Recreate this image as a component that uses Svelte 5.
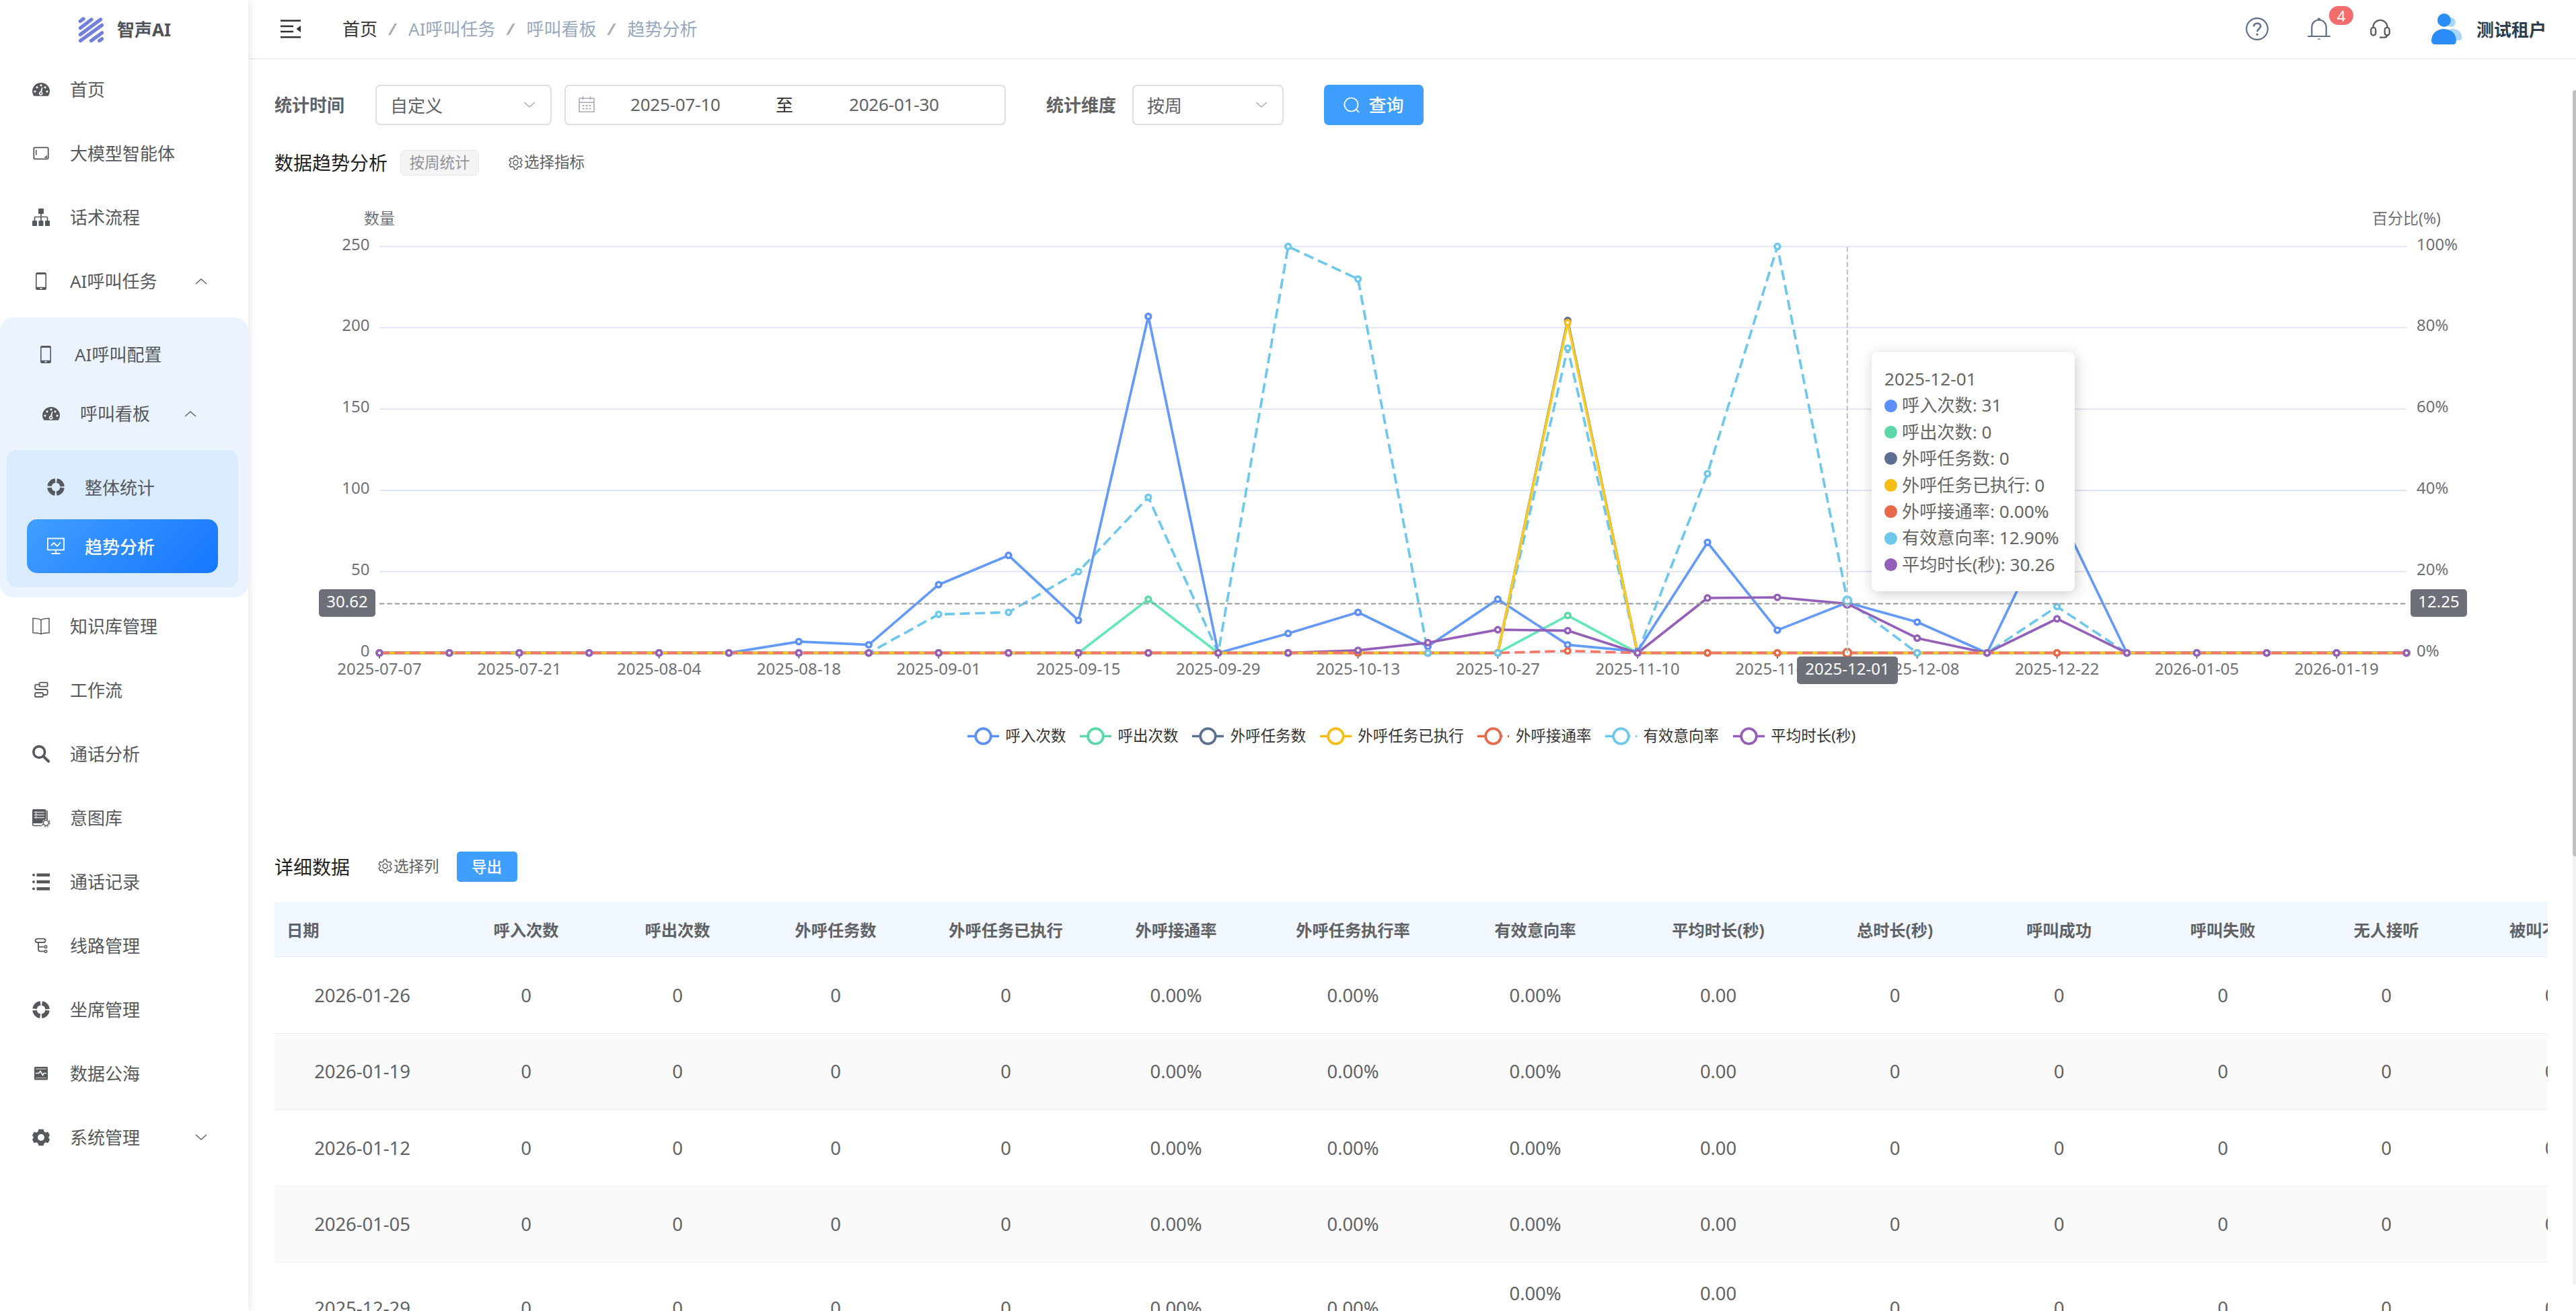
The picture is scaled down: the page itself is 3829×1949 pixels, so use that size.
<script>
  const topMenu = [
    { icon: 'gauge', label: '首页' },
    { icon: 'panel', label: '大模型智能体' },
    { icon: 'tree', label: '话术流程' },
    { icon: 'tablet', label: 'AI呼叫任务', arrow: 'up' }
  ];
  const bottomMenu = [
    { icon: 'book', label: '知识库管理' },
    { icon: 'flow', label: '工作流' },
    { icon: 'search', label: '通话分析' },
    { icon: 'intent', label: '意图库' },
    { icon: 'list', label: '通话记录' },
    { icon: 'route', label: '线路管理' },
    { icon: 'donut', label: '坐席管理' },
    { icon: 'pulse', label: '数据公海' },
    { icon: 'gear', label: '系统管理', arrow: 'down' }
  ];
  const crumbs = ['AI呼叫任务', '呼叫看板', '趋势分析'];

  // Plot geometry, in the coordinates of the chart's viewBox
  const X0 = 564;
  const X1 = 3577;
  const Y0 = 970.7;
  const YT = 366.5;
  const N = 30;
  const px = (i) => X0 + ((X1 - X0) * i) / (N - 1);
  const py = (v, max = 250) => Y0 - ((Y0 - YT) * v) / max;

  const fill = (points) => Array.from({ length: N }, (_, i) => points[i] ?? 0);
  const series = [
    { name: '呼入次数', color: '#5b8ff9', line: '#649afa', max: 250, tip: '31', data: fill({ 6: 7, 7: 5, 8: 42, 9: 60, 10: 20, 11: 207, 13: 12, 14: 25, 15: 4, 16: 33, 17: 5, 18: 1, 19: 68, 20: 14, 21: 31, 22: 19, 24: 89 }) },
    { name: '呼出次数', color: '#5ad8a6', line: '#64e8b5', max: 250, tip: '0', data: fill({ 11: 33, 17: 23 }) },
    { name: '外呼任务数', color: '#5d7092', line: '#667b9f', max: 250, tip: '0', data: fill({ 17: 204.5 }) },
    { name: '外呼任务已执行', color: '#f6bd16', line: '#fccb22', max: 250, tip: '0', data: fill({ 17: 203.2 }) },
    { name: '外呼接通率', color: '#e8684a', line: '#f5776a', max: 100, dash: true, tip: '0.00%', data: fill({ 17: 0.5 }) },
    { name: '有效意向率', color: '#6dc8ec', line: '#6dc8ec', max: 100, dash: true, tip: '12.90%', data: fill({ 8: 9.5, 9: 10, 10: 20, 11: 38.3, 13: 100, 14: 92, 17: 75, 19: 44.1, 20: 100, 21: 12.9, 24: 11.4 }) },
    { name: '平均时长(秒)', color: '#945fb9', line: '#945fb9', max: 250, tip: '30.26', data: fill({ 14: 1.6, 15: 6.3, 16: 14.3, 17: 13.7, 19: 33.8, 20: 34.2, 21: 30.26, 22: 9.1, 24: 21 }) }
  ];
  const lineOrder = [5, 1, 0, 6, 2, 3, 4];
  const path = (s) => s.data.map((v, i) => `${px(i).toFixed(1)},${py(v, s.max).toFixed(1)}`).join(' ');
  const markers = series.flatMap((s) => s.data.map((v, i) => ({ i, v, s })));
  const xLabels = ['2025-07-07', '2025-07-21', '2025-08-04', '2025-08-18', '2025-09-01', '2025-09-15', '2025-09-29', '2025-10-13', '2025-10-27', '2025-11-10', '2025-11-24', '2025-12-08', '2025-12-22', '2026-01-05', '2026-01-19'];
  const ticks = [0, 1, 2, 3, 4, 5];

  const columns = ['日期', '呼入次数', '呼出次数', '外呼任务数', '外呼任务已执行', '外呼接通率', '外呼任务执行率', '有效意向率', '平均时长(秒)', '总时长(秒)', '呼叫成功', '呼叫失败', '无人接听', '被叫不在线'];
  const cells = ['0', '0', '0', '0', '0.00%', '0.00%', '0.00%', '0.00', '0', '0', '0', '0', '0'];
  const dates = ['2026-01-26', '2026-01-19', '2026-01-12', '2026-01-05', '2025-12-29'];
</script>

{#snippet icon(name)}
  <svg class="icon" viewBox="0 0 26 26" fill="none" stroke="currentColor" stroke-width="1.8">
    {#if name === 'gauge'}
      <path d="M2.2 22.8A13 13 0 0 1 0 15.600a13 12.600 0 0 1 26 0 13 13 0 0 1-2.200 7.200z" fill="currentColor" stroke="none" />
      <g fill="#fff" stroke="none">
        <circle cx="4" cy="16" r="1.600" /><circle cx="7" cy="9.800" r="1.600" /><circle cx="13" cy="6.800" r="1.600" />
        <circle cx="19" cy="9.800" r="1.600" /><circle cx="22" cy="16" r="1.600" />
        <path d="M14 9.800l1.400.4-1.200 6.200a2.900 2.900 0 1 1-2-.4z" />
      </g>
      <circle cx="12.800" cy="18.800" r="1.200" fill="currentColor" stroke="none" />
    {:else if name === 'panel'}
      <rect x="2.300" y="4.300" width="21.400" height="17" rx="1.500" />
      <path d="M5.800 8v7.500" stroke-width="1.600" /><path d="M22 15.500v4.300h-4.500z" fill="currentColor" stroke="none" />
    {:else if name === 'tree'}
      <g fill="currentColor" stroke="none">
        <rect x="9" y="0" width="8" height="8" rx="1" /><rect x="0" y="18" width="7" height="8" rx="1" />
        <rect x="9.500" y="18" width="7" height="8" rx="1" /><rect x="19" y="18" width="7" height="8" rx="1" />
      </g>
      <path d="M13 7v12M3.500 19v-5.500q0-1 1-1h17q1 0 1 1V19" stroke-width="1.700" />
    {:else if name === 'tablet'}
      <path d="M7.500 0h11q2.500 0 2.500 2.500v21q0 2.500-2.500 2.500h-11Q5 26 5 23.500v-21Q5 0 7.500 0zM6.600 3v18.800h12.800V3zM11.500 23v1.600h3V23z" fill="currentColor" fill-rule="evenodd" stroke="none" />
    {:else if name === 'donut'}
      <circle cx="13" cy="13" r="9.600" stroke-width="6.600" stroke-dasharray="12.600 2.480" stroke-dashoffset="-1.240" />
    {:else if name === 'monitor'}
      <rect x=".9" y="1.500" width="24.200" height="17" /><path d="M13 18.500v5.500M6.500 24h13M6 12l4-4 5 5 5-5.500" />
    {:else if name === 'book'}
      <path d="M13 3.800C10.500 2 7 1.300 1 1.300v21.400c6 0 9.500.6 12 2 2.500-1.400 6-2 12-2V1.300C19 1.300 15.500 2 13 3.800zM13 3.800v21" stroke-width="1.500" />
    {:else if name === 'flow'}
      <rect x="10.600" y="1.600" width="12" height="6" rx="1.600" /><rect x="4" y="17" width="12" height="6" rx="1.600" />
      <path d="M10.600 4.600H6.500Q4 4.600 4 7.500v1.800q0 2.700 2.500 2.700h13.800q2.500 0 2.500 2.800v2.400q0 2.800-2.500 2.800H16" />
    {:else if name === 'search'}
      <circle cx="10.200" cy="10" r="8.400" stroke-width="3.600" /><path d="M16.500 16.500l7.600 7.300" stroke-width="4" stroke-linecap="round" />
    {:else if name === 'intent'}
      <path d="M2 0h16.500q2 0 2 2v14l-5 5H2q-2 0-2-2V2q0-2 2-2z" fill="currentColor" stroke="none" />
      <path d="M22 2v12.500M2 24.500q-1.300-.5-1.300-2V19M1.500 24.500H14" stroke-width="1.600" />
      <path d="M2.500 4.500H18M2.500 8.500H18M2.500 12.500H18M5.500 3v11" stroke="#d5d6d8" stroke-width="1.300" />
      <circle cx="20.300" cy="20.300" r="5.600" fill="#fff" stroke-width="1.400" stroke-dasharray="2.200 2.200" />
      <circle cx="20.300" cy="20.300" r="3.900" stroke-width="1.500" fill="#fff" />
    {:else if name === 'list'}
      <g fill="currentColor" stroke="none">
        <circle cx="2" cy="2.700" r="2" /><circle cx="2" cy="13" r="2" /><circle cx="2" cy="23.300" r="2" />
        <rect x="6.500" y=".5" width="19.500" height="4.600" /><rect x="6.500" y="10.700" width="19.500" height="4.600" /><rect x="6.500" y="21" width="19.500" height="4.600" />
      </g>
    {:else if name === 'route'}
      <rect x="4.600" y="2.600" width="15" height="5.400" rx="2.700" /><path d="M9 8v10.500q0 2.800 2.800 2.800h6M9 14.600h8.500" />
      <circle cx="20" cy="14.600" r="1.800" stroke-width="1.500" /><circle cx="20" cy="21.300" r="1.800" stroke-width="1.500" />
    {:else if name === 'pulse'}
      <rect x="3" y="3" width="20" height="19.500" rx="1.500" fill="currentColor" stroke="none" />
      <path d="M5 6.200h16M5 19.500h16" stroke="#ccc" stroke-width="1.200" /><path d="M5 12.500h4.500l2.500-3 3.500 6 1.800-3H21" stroke="#fff" stroke-width="1.600" />
    {:else if name === 'gear'}
      <path d="M9.500.8h7l1 3.500 2.500 1.400 3.400-1 2.600 5-2 3.300 2 3.300-2.600 5-3.400-1-2.500 1.400-1 3.500h-7l-1-3.500L6 20.300l-3.400 1-2.600-5L2 13 0 9.700l2.600-5 3.400 1 2.500-1.400zM13 8a5 5 0 1 0 0 10 5 5 0 0 0 0-10z" fill="currentColor" fill-rule="evenodd" stroke="none" />
    {:else if name === 'cog'}
      <path d="M10.600 1.200h4.800l.8 3.400 2.700 1.600 3.400-1 2.400 4.200-2.600 2.400v3l2.600 2.400-2.400 4.200-3.400-1-2.700 1.600-.8 3.400h-4.800l-.8-3.400-2.700-1.600-3.400 1-2.400-4.200 2.600-2.400v-3L1.300 9.400l2.400-4.200 3.400 1 2.700-1.600z" />
      <circle cx="13" cy="13.300" r="4.300" />
    {/if}
  </svg>
{/snippet}

{#snippet chevron(dir)}
  <svg class="chevron" class:up={dir === 'up'} viewBox="0 0 18 10" fill="none" stroke="currentColor" stroke-width="1.500"><path d="M1 1l8 7 8-7" /></svg>
{/snippet}

{#snippet menuItem(item)}
  <li class="item">
    {@render icon(item.icon)}
    <span>{item.label}</span>
    {#if item.arrow}{@render chevron(item.arrow)}{/if}
  </li>
{/snippet}

<div class="app">
  <aside class="sidebar">
    <div class="brand">
      <svg class="logo" viewBox="0 0 40 40" stroke="#7180dc" stroke-width="5.400" stroke-linecap="round">
        <path d="M3.200 7.200l5-3.600M3.500 17.600L20.500 4.600M3.500 27.600L34.500 4.600M3.500 37L36.500 13.200M20 37l16.500-12M32.500 37l4-2.800" />
      </svg>
      <span>智声AI</span>
    </div>
    <ul class="menu top">
      {#each topMenu as item}{@render menuItem(item)}{/each}
    </ul>
    <div class="submenu">
      <div class="item sub">{@render icon('tablet')}<span>AI呼叫配置</span></div>
      <div class="item sub deep">{@render icon('gauge')}<span>呼叫看板</span>{@render chevron('up')}</div>
      <div class="nested">
        <div class="item leaf">{@render icon('donut')}<span>整体统计</span></div>
        <div class="item leaf active">{@render icon('monitor')}<span>趋势分析</span></div>
      </div>
    </div>
    <ul class="menu bottom">
      {#each bottomMenu as item}{@render menuItem(item)}{/each}
    </ul>
  </aside>

  <main class="main">
    <header class="topbar">
      <svg class="fold" viewBox="0 0 30 28" stroke="#303133" stroke-width="2.600" fill="none">
        <path d="M0 1.800h30M0 10h19M0 18h19M0 26.200h30" /><path d="M30 9v10l-6.500-5z" fill="#303133" stroke="none" />
      </svg>
      <nav class="crumbs">
        <span class="home">首页</span>
        {#each crumbs as c}<i>/</i><span>{c}</span>{/each}
      </nav>
      <div class="tools">
        <svg class="help" viewBox="0 0 36 36" fill="none" stroke="#5f6f89" stroke-width="2.200">
          <circle cx="18" cy="18" r="15.800" /><path d="M13 14.500c0-3 2.200-4.800 5-4.800s5.200 1.700 5.200 4.400c0 3.700-5 3.600-5 8" stroke-width="2.600" /><circle cx="18.100" cy="26.200" r="1.600" fill="#5f6f89" stroke="none" />
        </svg>
        <div class="bell">
          <svg viewBox="0 0 34 34" fill="none" stroke="#5f6f89" stroke-width="2.200">
            <path d="M6.300 28V14.500a10.700 11 0 0 1 21.400 0V28M1 28h32" stroke-linecap="round" /><circle cx="17" cy="2.600" r="2.200" fill="#5f6f89" stroke="none" /><path d="M14.500 31.500h5q-2.500 3-5 0z" fill="#5f6f89" stroke="none" />
          </svg>
          <span class="badge">4</span>
        </div>
        <svg class="headset" viewBox="0 0 30 28" fill="none" stroke="#565656" stroke-width="2.200">
          <path d="M4.500 12v-1a10.500 10 0 0 1 21 0v1" /><rect x="1.300" y="12" width="7" height="11.500" rx="3.200" /><rect x="21.700" y="12" width="7" height="11.500" rx="3.200" /><path d="M25.500 23q-.5 3.700-4.500 3.700h-6" stroke-linecap="round" />
        </svg>
        <svg class="avatar" viewBox="0 0 46 46">
          <circle cx="29" cy="13" r="7" fill="#a9d5ff" /><path d="M28 23h6q11 2 11.500 12.500 0 4.500-6 4.500H30z" fill="#a9d5ff" />
          <circle cx="19" cy="10" r="10" fill="#2a8df8" /><path d="M18.500 23Q36 24 37 40q0 6-5 6H6q-5.500 0-6-5.500Q1 24 18.500 23z" fill="#2a8df8" />
        </svg>
        <strong>测试租户</strong>
      </div>
    </header>

    <section class="content">
      <div class="filters">
        <label for="range">统计时间</label>
        <div id="range" class="field select range">自定义{@render chevron('down')}</div>
        <div class="field dates">
          <svg class="cal" viewBox="0 0 24 24" fill="none" stroke="#a8abb2" stroke-width="1.600">
            <path d="M1 3.200h22v20H1zM1 9.200h22M6.500.3v5M17.500.3v5" /><path d="M5.500 14h3M10.500 14h3M15.500 14h3M5.500 18.500h3M10.500 18.500h3M15.500 18.500h3" stroke-width="2" />
          </svg>
          <span class="date">2025-07-10</span><span class="to">至</span><span class="date">2026-01-30</span>
        </div>
        <label class="second" for="unit">统计维度</label>
        <div id="unit" class="field select unit">按周{@render chevron('down')}</div>
        <button class="query">
          <svg viewBox="0 0 24 24" fill="none" stroke="#fff" stroke-width="1.700"><circle cx="11.500" cy="11.500" r="10" /><path d="M18.600 18.600l4.600 4.600" /></svg><span>查询</span>
        </button>
      </div>

      <div class="heading">
        <h2>数据趋势分析</h2>
        <span class="tag">按周统计</span>
        <a class="link metrics">{@render icon('cog')}选择指标</a>
      </div>

      <div class="chart">
        <svg class="plot" viewBox="408 261 3379 1005">
          <g class="axis">
            <text x="564" y="333" text-anchor="middle" class="name">数量</text>
            <text x="3577" y="333" text-anchor="middle" class="name">百分比(%)</text>
            {#each ticks as t}
              <line x1={X0} x2={X1} y1={py(t * 50)} y2={py(t * 50)} class="grid" />
              <text x="549.500" y={py(t * 50) + 5} text-anchor="end">{t * 50}</text>
              <text x="3592" y={py(t * 50) + 5}>{t * 20}%</text>
            {/each}
            {#each xLabels as l, i}
              <line x1={px(i * 2)} x2={px(i * 2)} y1="971" y2="979" class="tick" />
              <text x={px(i * 2)} y="1002.500" text-anchor="middle">{l}</text>
            {/each}
          </g>
          {#each lineOrder as k}
            <polyline points={path(series[k])} fill="none" stroke={series[k].line} stroke-width="3.700" stroke-linejoin="bevel" stroke-dasharray={series[k].dash ? '15 7.5' : undefined} />
          {/each}
          {#each markers as m}
            {#if !(m.s === series[6] && m.v === 0 && [15, 16].includes(m.i))}
              <circle cx={px(m.i)} cy={py(m.v, m.s.max)} r={m.i === 21 ? 5.600 : 3.900} fill="#fff" stroke={m.s.color} stroke-width="3.500" />
            {/if}
          {/each}
          <circle cx={px(21)} cy={py(12.9, 100)} r="5.600" fill="#fff" stroke="#6dc8ec" stroke-width="3.500" />
          <line x1={X0} x2={X1} y1="897.500" y2="897.500" class="pointer" />
          <line x1={px(21)} x2={px(21)} y1="367" y2="971" class="pointer light" />
          <g class="chip">
            <rect x="474" y="876" width="84" height="41" rx="5" /><text x="516" y="902.500">30.62</text>
            <rect x="3583" y="876" width="84" height="41" rx="5" /><text x="3625" y="902.500">12.25</text>
            <rect x="2671" y="976" width="150" height="41" rx="5" /><text x="2746" y="1002.500">2025-12-01</text>
          </g>
        </svg>
        <div class="tooltip">
          <p>2025-12-01</p>
          {#each series as s}
            <p><svg class="dot" viewBox="0 0 18 18"><circle cx="9" cy="9" r="9" fill={s.color} /></svg>{s.name}: {s.tip}</p>
          {/each}
        </div>
        <div class="legend">
          {#each series as s}
            <span>
              <svg viewBox="0 0 47 27" stroke={s.color} stroke-width="3.700" fill="#fff">
                <line x1="0" x2="47" y1="13.500" y2="13.500" stroke-dasharray={s.dash ? '15 7.5' : undefined} /><circle cx="23.500" cy="13.500" r="11.300" />
              </svg><em>{s.name}</em>
            </span>
          {/each}
        </div>
      </div>

      <div class="heading detail">
        <h2>详细数据</h2>
        <a class="link">{@render icon('cog')}选择列</a>
        <button class="export">导出</button>
      </div>

      <div class="table">
        <div class="row head">
          {#each columns as c}<div class="cell">{c}</div>{/each}
        </div>
        {#each dates as d, r}
          <div class="row" class:striped={r % 2 === 1} class:tall={r === 4}>
            <div class="cell">{d}</div>
            {#each cells as v, c}
              <div class="cell" class:raised={r === 4 && (c === 6 || c === 7)}>{v}</div>
            {/each}
          </div>
        {/each}
      </div>
    </section>
    <div class="scrollbar"><div class="thumb"></div></div>
  </main>
</div>

<style>
  :global(body) {
    background: #fff;
    font-family: 'Noto Sans', 'Noto Sans CJK SC', sans-serif;
    color: #606266;
  }
  * { box-sizing: border-box; }
  .app { display: flex; width: 100%; height: 1949px; overflow: hidden; }
  .sidebar { width: 369px; flex: none; background: #fff; box-shadow: 3px 0 12px rgba(0, 0, 0, 0.09); z-index: 1; }
  .brand { display: flex; align-items: center; height: 88px; padding-left: 116px; gap: 19px; font-size: 26px; font-weight: 700; color: #505357; }
  .brand span { padding-bottom: 2px; }
  .logo { width: 39px; height: 40px; fill: none; }
  .menu { list-style: none; margin: 0; padding: 0 0 0 48px; }
  .menu.top { margin-top: -3px; }
  .menu.bottom { margin-top: -5px; }
  .item { display: flex; align-items: center; height: 95px; font-size: 26px; color: #55585c; white-space: nowrap; }
  .item span { margin-left: 30px; line-height: 36px; }
  .icon { width: 26px; height: 26px; flex: none; overflow: visible; }
  .chevron { width: 18px; height: 10px; flex: none; }
  .chevron.up { transform: rotate(180deg); }
  .item .chevron { margin: 0 61px 0 auto; color: #606266; }
  .submenu { margin-top: 7px; background: #ebf3ff; border-radius: 20px; padding: 11px 15px 15px 10px; height: 416px; }
  .sub { height: 88px; padding-left: 45px; }
  .deep { padding-left: 53px; }
  .sub.deep .chevron { margin-right: 62px; }
  .nested { height: 204px; margin-top: 10px; background: #dbebfe; border-radius: 15px; padding: 15px 30px 0; }
  .leaf { height: 80px; padding-left: 30px; }
  .leaf span { padding-top: 1px; }
  .leaf.active { margin-top: 8px; border-radius: 15px; background: linear-gradient(135deg, #409eff, #1677ff); color: #fff; font-weight: 500; }

  .main { flex: 1; min-width: 0; position: relative; }
  .topbar { height: 88px; display: flex; align-items: center; border-bottom: 1px solid #dfe3e8; padding: 0 44px 2px 48px; }
  .fold { width: 30px; height: 28px; }
  .crumbs { display: flex; margin-left: 62px; font-size: 26px; line-height: 36px; color: #97a8be; }
  .crumbs .home { color: #303133; }
  .crumbs i { width: 12px; margin: 0 17px; font-weight: 700; font-size: 24px; color: #a8abb2; }
  .tools { margin-left: auto; display: flex; align-items: center; }
  .help { width: 36px; height: 36px; }
  .bell { position: relative; margin-left: 57px; width: 34px; height: 34px; }
  .badge { position: absolute; left: 32px; top: -17px; width: 36px; height: 28px; border-radius: 14px; background: #f56c6c; color: #fff; font-size: 22px; line-height: 28px; text-align: center; }
  .headset { width: 30px; height: 28px; margin-left: 59px; }
  .avatar { width: 46px; height: 46px; margin: 0 21px 0 61px; }
  strong { font-size: 26px; color: #2c3e50; }

  .content { padding: 38px 42px 0 39px; }
  .filters { display: flex; align-items: center; height: 60px; }
  label { font-size: 26px; font-weight: 700; width: 150px; line-height: 36px; }
  .field { height: 60px; border: 2px solid #dcdfe6; border-radius: 7px; display: flex; align-items: center; font-size: 26px; }
  .select { padding: 0 22px 0 20px; justify-content: space-between; color: #606266; }
  .select .chevron { color: #a8abb2; }
  .range { width: 262px; }
  .dates { width: 656px; margin-left: 19px; padding: 0 0 2px 19px; }
  .cal { width: 24px; height: 24px; margin-right: 53px; }
  .date { font-size: 26px; letter-spacing: -0.2px; width: 135px; }
  .to { margin: 0 83px 0 81px; color: #303133; }
  label.second { width: 128px; margin-left: 60px; }
  .unit { width: 225px; }
  button { border: 0; background: #409eff; color: #fff; font-family: inherit; font-weight: 500; padding: 0; display: flex; align-items: center; justify-content: center; }
  .query { width: 148px; height: 60px; margin-left: 60px; border-radius: 7px; font-size: 26px; gap: 13px; }
  .query span { padding-bottom: 3px; }
  .query svg { width: 24px; height: 24px; }
  .heading { display: flex; align-items: center; height: 38px; margin-top: 37px; }
  h2 { margin: 0; font-size: 28px; font-weight: 400; color: #1f1f1f; line-height: 38px; }
  .tag { margin-left: 19px; width: 117px; height: 38px; line-height: 36px; text-align: center; font-size: 22.5px; color: #909399; background: #f4f4f5; border: 1px solid #e9e9eb; border-radius: 7px; }
  .link { display: flex; align-items: center; margin-left: 42px; padding-bottom: 2px; gap: 2px; font-size: 22.5px; line-height: 36px; color: #5c5f64; }
  .link.metrics { margin-left: 44px; }
  .link .icon { width: 21px; height: 21px; }

  .chart { position: relative; height: 1005px; }
  .plot { display: block; width: 3379px; height: 1005px; overflow: visible; }
  .axis text { font-size: 24px; fill: #6e7079; }
  .axis text.name { font-size: 23px; }
  .grid { stroke: #e0e6f1; stroke-width: 2; }
  .tick { stroke: #6e7079; stroke-width: 2; }
  .pointer { stroke: #999; stroke-width: 2; stroke-dasharray: 7.5 3.75; }
  .pointer.light { stroke: #b9bec9; }
  .chip rect { fill: #6e7079; }
  .chip text { fill: #fff; font-size: 24px; text-anchor: middle; }
  .tooltip { position: absolute; left: 2374px; top: 262px; width: 302px; height: 356px; padding: 21px 19px; border-radius: 8px; background: #fff; box-shadow: 2px 4px 20px rgba(0, 0, 0, 0.2); font-size: 26.200px; color: #666; }
  .tooltip p { margin: 0; height: 39.400px; line-height: 39.400px; display: flex; align-items: center; white-space: nowrap; }
  .dot { width: 19px; height: 19px; margin-right: 7px; }
  .legend { position: absolute; left: 1030px; top: 815px; display: flex; gap: 20.600px; }
  .legend span { display: flex; align-items: center; gap: 9.500px; height: 36px; font-size: 22.500px; color: #333; white-space: nowrap; }
  .legend em { font-style: normal; padding-bottom: 4px; }
  .legend svg { width: 47px; height: 27px; }

  .detail { height: 45px; margin-top: 0; }
  .export { width: 90px; height: 45px; margin-left: 26px; padding-bottom: 3px; border-radius: 5px; font-size: 22.500px; }
  .table { margin-top: 30px; overflow: hidden; }
  .row { display: grid; grid-template-columns: 261px 226px 224px 246px 260px 246px 280px 262px 282px 243px 245px 242px 244px 243px; height: 113.500px; border-bottom: 1px solid #ebeef5; font-size: 27.500px; }
  .row.head { height: 82px; background: #f0f7ff; font-size: 24.300px; font-weight: 700; }
  .row.striped { background: #fafafa; }
  .row.tall { height: 136px; }
  .cell { display: flex; align-items: center; justify-content: center; white-space: nowrap; letter-spacing: -0.1px; }
  .head .cell:first-child { justify-content: flex-start; padding-left: 18px; }
  .raised { padding-bottom: 45px; }

  .scrollbar { position: absolute; right: 0; top: 134px; width: 5px; height: 1776px; background: #f1f1f1; }
  .thumb { height: 1139px; background: #c1c1c1; border-radius: 4px 0 0 4px; }
</style>
